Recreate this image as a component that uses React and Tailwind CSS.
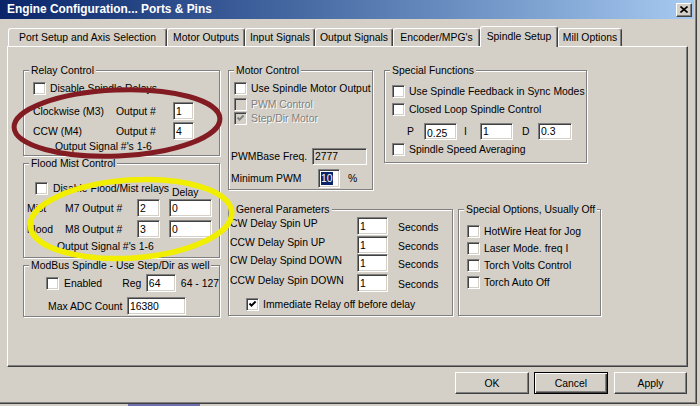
const sunken =
  "border border-t-[#808080] border-l-[#808080] border-r-white border-b-white shadow-[inset_1px_1px_0_#404040,inset_-1px_-1px_0_#d4d0c8]";

function Group({ title, className, children }) {
  return (
    <div
      className={`relative shrink-0 border border-[#808080] shadow-[inset_1px_1px_0_#fff,1px_1px_0_#fff] ${className}`}
    >
      <span className="absolute left-[5px] top-[-7px] whitespace-nowrap bg-[#d4d0c8] px-[2px] leading-[13px]">
        {title}
      </span>
      {children}
    </div>
  );
}

function Check({ checked, disabled }) {
  return (
    <span
      className={`relative inline-block h-[13px] w-[13px] shrink-0 ${sunken} ${
        disabled ? "bg-[#d4d0c8]" : "bg-white"
      }`}
    >
      {checked && (
        <svg viewBox="0 0 11 11" className="absolute inset-0 h-[11px] w-[11px]">
          <polyline
            points="2.5,4.5 4.5,6.6 8.6,2.5"
            fill="none"
            stroke={disabled ? "#808080" : "#000"}
            strokeWidth="1.9"
          />
        </svg>
      )}
    </span>
  );
}

function CheckRow({ label, checked, disabled, className = "" }) {
  return (
    <div className={`flex h-[13px] items-center ${className}`}>
      <Check checked={checked} disabled={disabled} />
      <span
        className={`ml-[4px] whitespace-nowrap ${
          disabled ? "text-[#808080] [text-shadow:1px_1px_0_#fff]" : ""
        }`}
      >
        {label}
      </span>
    </div>
  );
}

function Field({ children, className = "", gray }) {
  return (
    <span
      className={`flex shrink-0 items-center pl-[2px] ${sunken} ${gray ? "bg-[#d4d0c8]" : "bg-white"} ${className}`}
    >
      {children}
    </span>
  );
}

function Tab({ label, className = "", active }) {
  return (
    <div
      className={`flex shrink-0 items-center justify-center rounded-t-[3px] border-t border-l border-r border-t-white border-l-white border-r-[#404040] shadow-[inset_-1px_0_0_#808080] ${
        active ? "relative z-10 -mb-px h-[21px] bg-[#d4d0c8] pb-[2px]" : "h-[18px]"
      } ${className}`}
    >
      {label}
    </div>
  );
}

function Btn({ label, className = "", primary }) {
  return (
    <div
      className={`flex h-[22px] items-center justify-center ${
        primary
          ? "border border-black shadow-[inset_1px_1px_0_#fff,inset_-1px_-1px_0_#404040,inset_-2px_-2px_0_#808080]"
          : "border border-t-white border-l-white border-r-[#404040] border-b-[#404040] shadow-[inset_-1px_-1px_0_#808080]"
      } ${className}`}
    >
      {label}
    </div>
  );
}

export default function App() {
  const delays = ["CW Delay Spin UP", "CCW Delay Spin UP", "CW Delay Spind DOWN", "CCW Delay Spin DOWN"];
  const delayGap = ["mt-0", "mt-[1px]", "mt-0", "mt-[2px]"];

  return (
    <div className="relative h-[406px] w-[700px] overflow-hidden bg-[#d4d0c8] font-['Liberation_Sans',Arial,sans-serif] text-[10.4px] leading-[13px] text-black">
      <div className="h-[404px] w-[697px] border-r border-b border-[#404040] shadow-[inset_-1px_-1px_0_#808080]">
        {/* title bar */}
        <div className="flex h-[19px] w-[694px] items-center bg-gradient-to-r from-[#0a246a] to-[#a6caf0] pl-[7px]">
          <span className="text-[11.9px] font-bold text-white">Engine Configuration... Ports &amp; Pins</span>
          <div className="ml-auto mr-[2px] flex h-[14px] w-[16px] items-center justify-center bg-[#d4d0c8] border border-t-white border-l-white border-r-[#404040] border-b-[#404040] shadow-[inset_-1px_-1px_0_#808080]">
            <svg viewBox="0 0 8 7" className="h-[7px] w-[8px]">
              <path d="M0.5 0.5 L7.5 6.5 M7.5 0.5 L0.5 6.5" stroke="#000" strokeWidth="1.6" />
            </svg>
          </div>
        </div>

        {/* tabs */}
        <div className="ml-[8px] mt-[7px] flex items-end">
          <Tab label="Port Setup and Axis Selection" className="w-[159px]" />
          <Tab label="Motor Outputs" className="w-[78px]" />
          <Tab label="Input Signals" className="w-[70px]" />
          <Tab label="Output Signals" className="w-[78px]" />
          <Tab label="Encoder/MPG's" className="w-[87px]" />
          <Tab label="Spindle Setup" className="w-[78px]" active />
          <Tab label="Mill Options" className="w-[64px]" />
        </div>

        {/* panel */}
        <div className="ml-[7px] flex h-[321px] w-[681px] border border-t-white border-l-white border-r-[#404040] border-b-[#404040] pl-[15px] pt-[23px] shadow-[inset_-1px_-1px_0_#808080]">
          {/* left column */}
          <div className="flex w-[197px] flex-col">
            <Group title="Relay Control" className="h-[86px] w-[197px] pl-[9px] pt-[11px]">
              <CheckRow label="Disable Spindle Relays" />
              <div className="mt-[7px] flex h-[18px] items-center">
                <span className="w-[83px]">Clockwise (M3)</span>
                <span className="w-[57px]">Output #</span>
                <Field className="h-[18px] w-[21px]">1</Field>
              </div>
              <div className="mt-[2px] flex h-[18px] items-center">
                <span className="w-[83px]">CCW (M4)</span>
                <span className="w-[57px]">Output #</span>
                <Field className="h-[18px] w-[21px]">4</Field>
              </div>
              <div className="ml-[22px]">Output Signal #'s 1-6</div>
            </Group>

            <Group title="Flood Mist Control" className="mt-[7px] h-[95px] w-[197px] pl-[11px] pt-[18px]">
              <div className="flex h-[13px] items-start">
                <Check />
                <span className="ml-[5px] w-[119px] whitespace-nowrap">Disable Flood/Mist relays</span>
                <span className="mt-[4px]">Delay</span>
              </div>
              <div className="-ml-[8px] mt-[4px] flex h-[18px] items-center">
                <span className="w-[38px]">Mist</span>
                <span className="w-[72px]">M7 Output #</span>
                <Field className="h-[18px] w-[23px]">2</Field>
                <Field className="ml-[9px] h-[18px] w-[43px]">0</Field>
              </div>
              <div className="-ml-[8px] mt-[3px] flex h-[18px] items-center">
                <span className="w-[38px]">Flood</span>
                <span className="w-[72px]">M8 Output #</span>
                <Field className="h-[18px] w-[23px]">3</Field>
                <Field className="ml-[9px] h-[18px] w-[43px]">0</Field>
              </div>
              <div className="ml-[22px] mt-[2px]">Output Signal #'s 1-6</div>
            </Group>

            <Group
              title="ModBus Spindle - Use Step/Dir as well"
              className="mt-[7px] h-[52px] w-[197px] pl-[22px] pt-[8px]"
            >
              <div className="flex h-[18px] items-center">
                <Check />
                <span className="ml-[5px] w-[59px]">Enabled</span>
                <span className="w-[24px]">Reg</span>
                <Field className="h-[18px] w-[30px]">64</Field>
                <span className="ml-[5px] whitespace-nowrap">64 - 127</span>
              </div>
              <div className="ml-[2px] mt-[5px] flex h-[18px] items-center">
                <span className="w-[79px] whitespace-nowrap">Max ADC Count</span>
                <Field className="h-[18px] w-[59px]">16380</Field>
              </div>
            </Group>
          </div>

          {/* middle / right */}
          <div className="ml-[8px] flex flex-col">
            <div className="flex items-start">
              <Group title="Motor Control" className="h-[120px] w-[145px] pl-[5px] pt-[11px]">
                <CheckRow label="Use Spindle Motor Output" />
                <CheckRow label="PWM Control" disabled className="mt-[3px]" />
                <CheckRow label="Step/Dir Motor" checked disabled className="mt-[1px]" />
                <div className="-ml-[3px] mt-[23px] flex h-[17px] items-center">
                  <span className="w-[81px] whitespace-nowrap">PWMBase Freq.</span>
                  <Field gray className="h-[17px] w-[55px]">
                    2777
                  </Field>
                </div>
                <div className="-ml-[3px] mt-[4px] flex h-[19px] items-center">
                  <span className="w-[87px] whitespace-nowrap">Minimum PWM</span>
                  <Field className="h-[19px] w-[22px]">
                    <span className="bg-[#0a246a] text-white">10</span>
                  </Field>
                  <span className="ml-[8px]">%</span>
                </div>
              </Group>

              <Group title="Special Functions" className="ml-[11px] h-[93px] w-[203px] pl-[7px] pt-[14px]">
                <CheckRow label="Use Spindle Feedback in Sync Modes" />
                <CheckRow label="Closed Loop Spindle Control" className="mt-[5px]" />
                <div className="ml-[15px] mt-[7px] flex h-[17px] items-center">
                  <span className="w-[17px]">P</span>
                  <Field className="h-[17px] w-[33px] pt-[3px]">0.25</Field>
                  <span className="ml-[7px] w-[16px]">I</span>
                  <Field className="h-[17px] w-[33px]">1</Field>
                  <span className="ml-[9px] w-[16px]">D</span>
                  <Field className="h-[17px] w-[34px]">0.3</Field>
                </div>
                <CheckRow label="Spindle Speed Averaging" className="mt-[3px]" />
              </Group>
            </div>

            <div className="mt-[19px] flex items-start">
              <Group title="General Parameters" className="h-[107px] w-[225px] pl-[1px] pt-[7px]">
                {delays.map((d, i) => (
                  <div key={d} className={`flex h-[18px] items-start ${delayGap[i]}`}>
                    <span className="w-[127px] whitespace-nowrap">{d}</span>
                    <Field className="h-[18px] w-[31px]">1</Field>
                    <span className="ml-[10px] mt-[4px]">Seconds</span>
                  </div>
                ))}
                <CheckRow label="Immediate Relay off before delay" checked className="ml-[16px] mt-[6px]" />
              </Group>

              <Group title="Special Options, Usually Off" className="ml-[5px] h-[107px] w-[143px] pl-[8px] pt-[15px]">
                <CheckRow label="HotWire Heat for Jog" />
                <CheckRow label="Laser Mode. freq I" className="mt-[4px]" />
                <CheckRow label="Torch Volts Control" className="mt-[4px]" />
                <CheckRow label="Torch Auto Off" className="mt-[4px]" />
              </Group>
            </div>
          </div>
        </div>

        {/* buttons */}
        <div className="ml-[455px] mt-[5px] flex">
          <Btn label="OK" className="w-[74px]" />
          <Btn label="Cancel" primary className="ml-[5px] w-[74px]" />
          <Btn label="Apply" className="ml-[6px] w-[73px]" />
        </div>
      </div>
      <div className="ml-[128px] h-[2px] w-[72px] bg-[#6d6fae]" />

      {/* hand-drawn annotation marks */}
      <svg className="pointer-events-none absolute left-0 top-0" width="700" height="406">
        <ellipse
          cx="117"
          cy="123"
          rx="103"
          ry="33"
          fill="none"
          stroke="#821b22"
          strokeWidth="5"
          transform="rotate(-2.5 117 123)"
        />
        <ellipse
          cx="131"
          cy="219"
          rx="101"
          ry="39"
          fill="none"
          stroke="#f2ee00"
          strokeWidth="5.5"
          transform="rotate(-4 131 219)"
        />
      </svg>
    </div>
  );
}
